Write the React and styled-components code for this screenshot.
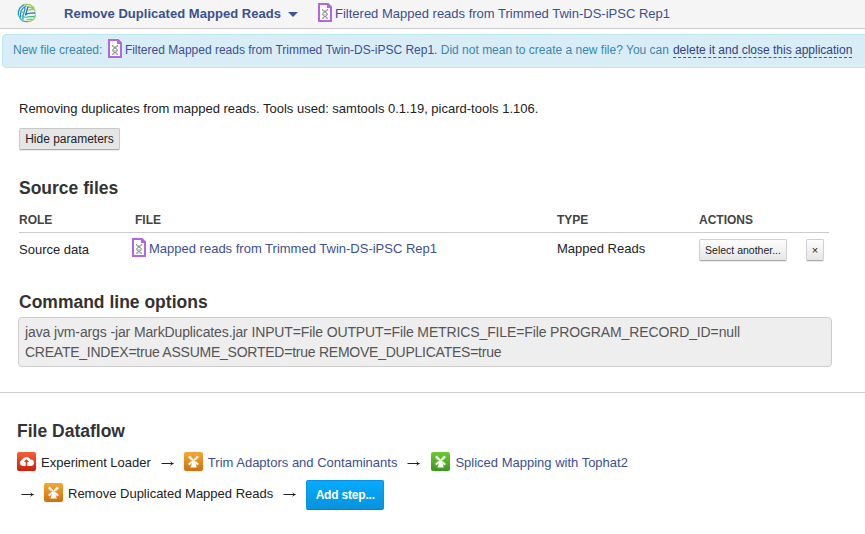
import React from "react";
import styled, { createGlobalStyle } from "styled-components";

const Global = createGlobalStyle`
  body { margin: 0; background: #fff; }
  * { box-sizing: border-box; }
`;

const Page = styled.div`
  width: 865px;
  height: 534px;
  overflow: hidden;
  font: 13px/20px "Liberation Sans", Arial, sans-serif;
  color: #222;
  white-space: nowrap;
`;

const Header = styled.header`
  display: flex;
  height: 29px;
  padding: 0 0 0 17px;
  background: #f5f5f5;
  border-bottom: 1px solid #ccc;
`;

const LogoBox = styled.div`
  width: 47px;
  padding-top: 3px;
`;

const AppMenu = styled.a`
  display: flex;
  width: 254px;
  padding-top: 4px;
  font-weight: bold;
  letter-spacing: 0.033px;
  color: #3b5090;
`;

const Caret = styled.span`
  margin: 8px 0 0 7px;
  width: 10px;
  height: 5px;
  border: 5px solid transparent;
  border-top-color: #3d5796;
  border-bottom: 0;
`;

const FileLink = styled.a`
  display: flex;
  gap: 3px;
  padding-top: 3px;
  color: #3b5090;

  span { margin-top: 1px; }
`;

const Notice = styled.div`
  display: flex;
  height: 34px;
  width: 880px;
  margin: 5px 0 0 2px;
  padding: 4px 0 0 10px;
  background: #d9edf7;
  border: 1px solid #bce8f1;
  border-radius: 4px;
  font-size: 12px;
  color: #3a87ad;
`;

const NoticeText = styled.span`
  margin-top: 1px;
`;

const NoticeFile = styled.a`
  display: flex;
  gap: 3px;
  margin-left: 5.5px;
  color: #3b5090;

  span { margin-top: 1px; }
`;

const DashedLink = styled.a`
  height: 18px;
  margin: 1px 0 0 4px;
  color: #31437f;
  border-bottom: 1px dashed #4156a0;
`;

const Content = styled.main`
  padding: 31px 33px 0 19px;
`;

const Description = styled.p`
  margin: 0 0 9px;
`;

const Button = styled.button`
  display: block;
  height: 22px;
  width: ${(p) => p.$w}px;
  padding: 0;
  font: ${(p) => p.$size || 12}px/20px "Liberation Sans", Arial, sans-serif;
  color: #222;
  background: ${(p) => (p.$pressed ? "#e6e6e6" : "linear-gradient(#fdfdfd, #e6e6e6)")};
  border: 1px solid ${(p) => (p.$pressed ? "#c8c8c8" : "#d0d0d0")};
  border-bottom-color: #aaa;
  border-radius: 2px;
  box-shadow: 0 1px 1px rgba(0, 0, 0, 0.08);
`;

const Heading = styled.h3`
  margin: ${(p) => p.$mt}px 0 0;
  font: bold 17.5px/24px "Liberation Sans", Arial, sans-serif;
  color: #333;
`;

const TableHead = styled.div`
  display: grid;
  grid-template-columns: 116px 422px 142px 1fr;
  width: 810px;
  height: 23px;
  margin-top: 10px;
  border-bottom: 1px solid #ccc;
  font-size: 12px;
  font-weight: bold;
  color: #444;
`;

const TableRow = styled.div`
  display: grid;
  grid-template-columns: 113px 425px 142px 107px 18px;
  height: 56px;
  padding-top: 6px;
`;

const RoleCell = styled.div`
  padding-top: 1px;
`;

const FileCell = styled.a`
  display: flex;
  gap: 3px;
  height: 20px;
  color: #3b5090;

  svg { margin-top: -1px; }
`;

const Command = styled.pre`
  width: 814px;
  height: 50px;
  margin: 3px 0 25px -1px;
  padding: 4px 6px;
  font: 14px/20px "Liberation Sans", Arial, sans-serif;
  color: #555;
  background: #eee;
  border: 1px solid #ccc;
  border-radius: 4px;
`;

const CommandLine = styled.div`
  letter-spacing: ${(p) => p.$spacing}px;
`;

const Dataflow = styled.section`
  padding: 26px 0 0 17px;
  border-top: 1px solid #ccc;
`;

const Steps = styled.div`
  display: flex;
  align-items: center;
  height: 30px;
  margin-top: ${(p) => p.$mt}px;
`;

const Step = styled.div`
  display: flex;
  align-items: flex-start;
  height: 20px;
  gap: 5px;
  color: ${(p) => (p.$link ? "#3b5090" : "#222")};

  span { padding-top: 1px; }
`;

const ArrowBox = styled.svg`
  margin: 2px ${(p) => p.$after || 9}px 0 ${(p) => (p.$first ? 4 : 10)}px;
`;

const AddButton = styled.button`
  width: 78px;
  height: 30px;
  margin-top: 4px;
  padding: 0;
  font: bold 12px/28px "Liberation Sans", Arial, sans-serif;
  letter-spacing: -0.2px;
  color: #fff;
  background: linear-gradient(#05aaff, #0893dc);
  border: 1px solid #0a92dc;
  border-bottom-color: #0880c4;
  border-radius: 2px;
`;

const Tile = styled.svg`
  display: block;
`;

function FileIcon() {
  return (
    <svg width="14" height="19" viewBox="0 0 14 19">
      <path d="M1 1H10L13 4V18H1Z" fill="#fff" stroke="#b366e0" strokeWidth="2" />
      <path d="M9 1V5H13V4L10 1Z" fill="#b366e0" />
      <path d="M4.5 6C4.5 9.5 9.5 8.5 9.5 11.5C9.5 13.5 4.5 13 4.5 16M9.5 6C9.5 9.5 4.5 8.5 4.5 11.5C4.5 13.5 9.5 13 9.5 16" fill="none" stroke="#858585" strokeWidth="1" />
      <path d="M4 7.5H10M5 11.5H9M4 15H10" stroke="#aaa" strokeWidth="0.7" />
    </svg>
  );
}

function Logo() {
  return (
    <svg width="20" height="20" viewBox="0 0 20 20" fill="none" strokeWidth="1.3" strokeLinecap="round">
      <circle cx="10" cy="10" r="8.8" fill="#edf5f3" />
      <path d="M1.5 12A9 9 0 0 1 7 1.8M3.5 14C3 9 5 5 9 3M6 16C5 11 8 9 8 5" stroke="#2b8fd0" />
      <path d="M8 1.5A9 9 0 0 1 17 5M11 4C15 4 17 5 18 8M12 7L17 6" stroke="#9bcb58" />
      <path d="M11 4L8.5 12M9 11.5C12 9 14 10.5 18 10" stroke="#2578ad" />
      <path d="M2 13C4 18 8 19 11 18.5M10 14C13 13 15 14 17.5 13.5" stroke="#35b5a5" />
      <path d="M12 18.5C16 18 18 15 18.5 12M10 16.7L15 16.2" stroke="#a6c944" />
      <path d="M3 8L7 10M5 13L9 14.5" stroke="#54bd85" />
    </svg>
  );
}

function Arrow({ first, after }) {
  return (
    <ArrowBox $first={first} $after={after} width="14" height="8" viewBox="0 0 14 8">
      <path d="M0.5 4.5H12" stroke="#222" strokeWidth="1" />
      <path d="M9.3 2Q10.9 4 13.3 4.5Q10.9 5 9.3 7L10.3 4.5Z" fill="#222" />
    </ArrowBox>
  );
}

const tones = {
  red: ["#f4603c", "#cf1f0c"],
  orange: ["#f5a833", "#d06f0b"],
  green: ["#6ccb32", "#3b971c"],
};

function StepIcon({ tone, id }) {
  return (
    <Tile width="19" height="19" viewBox="0 0 19 19">
      <defs>
        <linearGradient id={id} x1="0" y1="0" x2="0" y2="1">
          <stop stopColor={tones[tone][0]} />
          <stop offset="1" stopColor={tones[tone][1]} />
        </linearGradient>
      </defs>
      <rect width="19" height="19" rx="2" fill={`url(#${id})`} />
      {tone === "red" ? (
        <>
          <path d="M5.4 14A3.1 3.1 0 0 1 4.8 8.1A4.8 4.8 0 0 1 13.4 7.4A3.3 3.3 0 0 1 13.8 14Z" fill="#fff" />
          <path d="M9.5 14V9" stroke="#df3d23" strokeWidth="1.6" />
          <path d="M6.9 10L9.5 6.9L12.1 10Z" fill="#df3d23" />
        </>
      ) : (
        <>
          <path d="M8.2 9H10.8L12.8 15.4H6.2L7.4 13Z" fill="#fff" />
          <path d="M4.8 4.3L14.2 12.7M14.2 4.3L4.8 12.7" stroke="#fff" strokeWidth="1.2" />
          <path d="M4 5.6L6.2 3.6L9 6.9L7.2 8.5ZM15 5.6L12.8 3.6L10 6.9L11.8 8.5ZM4 11.7L7 9.2L8 10.6L5.8 13.4ZM15 11.7L12 9.2L11 10.6L13.2 13.4Z" fill="#fff" fillOpacity="0.75" />
        </>
      )}
    </Tile>
  );
}

export default function App() {
  return (
    <Page>
      <Global />
      <Header>
        <LogoBox><Logo /></LogoBox>
        <AppMenu>Remove Duplicated Mapped Reads<Caret /></AppMenu>
        <FileLink><FileIcon /><span>Filtered Mapped reads from Trimmed Twin-DS-iPSC Rep1</span></FileLink>
      </Header>
      <Notice>
        <NoticeText>New file created:</NoticeText>
        <NoticeFile><FileIcon /><span>Filtered Mapped reads from Trimmed Twin-DS-iPSC Rep1.</span></NoticeFile>
        <NoticeText>&nbsp;Did not mean to create a new file? You can</NoticeText>
        <DashedLink>delete it and close this application</DashedLink>
      </Notice>
      <Content>
        <Description>Removing duplicates from mapped reads. Tools used: samtools 0.1.19, picard-tools 1.106.</Description>
        <Button $pressed $w={101}>Hide parameters</Button>
        <Heading $mt={26}>Source files</Heading>
        <TableHead><span>ROLE</span><span>FILE</span><span>TYPE</span><span>ACTIONS</span></TableHead>
        <TableRow>
          <RoleCell>Source data</RoleCell>
          <FileCell><FileIcon /><span>Mapped reads from Trimmed Twin-DS-iPSC Rep1</span></FileCell>
          <span>Mapped Reads</span>
          <Button $w={88} $size={10.5}>Select another...</Button>
          <Button $w={18} $size={11}>×</Button>
        </TableRow>
        <Heading $mt={1}>Command line options</Heading>
        <Command>
          <CommandLine $spacing={-0.123}>java jvm-args -jar MarkDuplicates.jar INPUT=File OUTPUT=File METRICS_FILE=File PROGRAM_RECORD_ID=null</CommandLine>
          <CommandLine $spacing={-0.243}>CREATE_INDEX=true ASSUME_SORTED=true REMOVE_DUPLICATES=true</CommandLine>
        </Command>
      </Content>
      <Dataflow>
        <Heading $mt={0}>File Dataflow</Heading>
        <Steps $mt={4}>
          <Step><StepIcon tone="red" id="loader" /><span>Experiment Loader</span></Step>
          <Arrow />
          <Step $link><StepIcon tone="orange" id="trim" /><span>Trim Adaptors and Contaminants</span></Step>
          <Arrow after={10} />
          <Step $link><StepIcon tone="green" id="mapping" /><span>Spliced Mapping with Tophat2</span></Step>
        </Steps>
        <Steps $mt={1}>
          <Arrow first />
          <Step><StepIcon tone="orange" id="remove" /><span>Remove Duplicated Mapped Reads</span></Step>
          <Arrow />
          <AddButton>Add step...</AddButton>
        </Steps>
      </Dataflow>
    </Page>
  );
}
